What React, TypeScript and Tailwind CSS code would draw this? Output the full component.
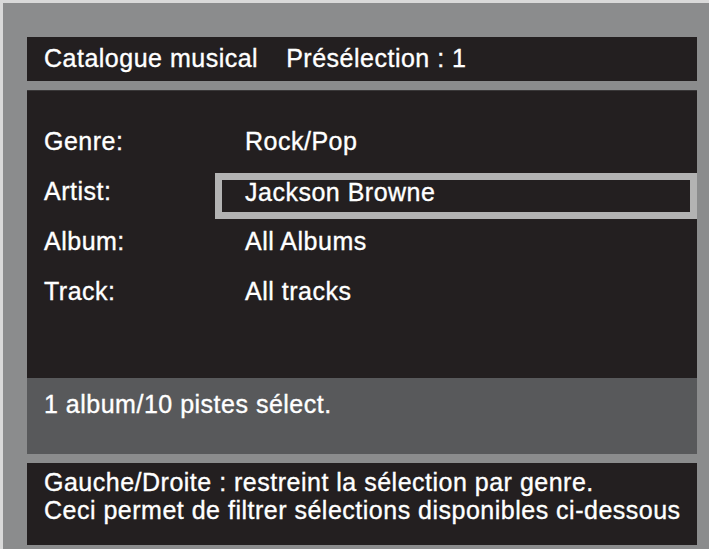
import React from "react";

const rows = [
  { label: "Genre:", value: "Rock/Pop", selected: false },
  { label: "Artist:", value: "Jackson Browne", selected: true },
  { label: "Album:", value: "All Albums", selected: false },
  { label: "Track:", value: "All tracks", selected: false },
];

export default function App() {
  return (
    <div
      className="w-[709px] h-[549px] bg-[#8b8c8d] border-t-[3px] border-l-[3px] border-[#d9d9d9] pl-[24px] pt-[34px] overflow-hidden text-white text-[25px] leading-none tracking-[0.5px] [-webkit-text-stroke:0.35px_white]"
      style={{ fontFamily: '"Liberation Sans", Arial, sans-serif' }}
    >
      <div className="w-[670px] flex flex-col">
        <div className="h-[44px] bg-[#231f20] flex items-center pl-[17px] pb-[2px]">
          <span>Catalogue musical</span>
          <span className="ml-[28px]">Présélection : 1</span>
        </div>
        <div className="mt-[9px] h-[288px] bg-[#231f20] border-t border-[#3a3839] pt-[25px] flex flex-col">
          {rows.map((r) => (
            <div key={r.label} className="h-[50px] flex items-start">
              <div className="w-[188px] pl-[17px] pt-[13px]">{r.label}</div>
              {r.selected ? (
                <div className="mt-[7px] h-[46px] flex-1 border-[7px] border-[#b3b3b3] pl-[23px] pt-0">
                  {r.value}
                </div>
              ) : (
                <div className="pl-[30px] pt-[13px]">{r.value}</div>
              )}
            </div>
          ))}
        </div>
        <div className="h-[76px] bg-[#58595b] pl-[17px] pt-[14px]">1 album/10 pistes sélect.</div>
        <div className="mt-[9px] h-[82px] bg-[#231f20] pl-[17px] pt-[7px] flex flex-col gap-[3px]">
          <div>Gauche/Droite : restreint la sélection par genre.</div>
          <div>Ceci permet de filtrer sélections disponibles ci-dessous</div>
        </div>
      </div>
    </div>
  );
}
